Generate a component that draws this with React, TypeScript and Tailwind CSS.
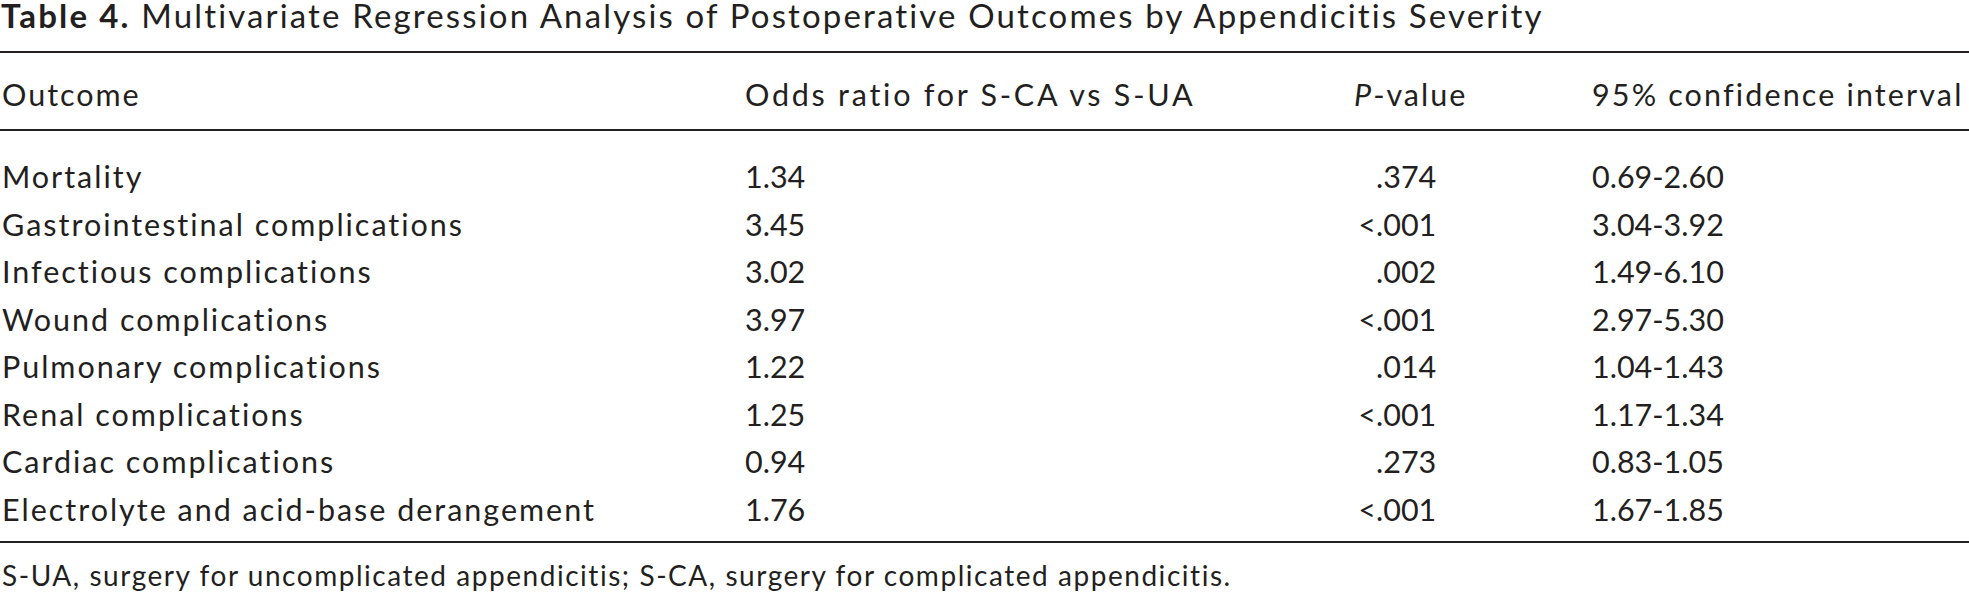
import React from "react";

type Row = {
  outcome: string;
  odds: string;
  lt: boolean;
  p: string;
  ci: string;
};

const rows: Row[] = [
  { outcome: "Mortality", odds: "1.34", lt: false, p: ".374", ci: "0.69-2.60" },
  { outcome: "Gastrointestinal complications", odds: "3.45", lt: true, p: ".001", ci: "3.04-3.92" },
  { outcome: "Infectious complications", odds: "3.02", lt: false, p: ".002", ci: "1.49-6.10" },
  { outcome: "Wound complications", odds: "3.97", lt: true, p: ".001", ci: "2.97-5.30" },
  { outcome: "Pulmonary complications", odds: "1.22", lt: false, p: ".014", ci: "1.04-1.43" },
  { outcome: "Renal complications", odds: "1.25", lt: true, p: ".001", ci: "1.17-1.34" },
  { outcome: "Cardiac complications", odds: "0.94", lt: false, p: ".273", ci: "0.83-1.05" },
  { outcome: "Electrolyte and acid-base derangement", odds: "1.76", lt: true, p: ".001", ci: "1.67-1.85" },
];

const cols = "grid grid-cols-[743px_609px_238px_1fr]";

// p-values line up on the decimal point, "<" sits in a fixed slot
const PValue = ({ lt, p }: { lt: boolean; p: string }) => (
  <span className="whitespace-nowrap">
    <span className="inline-block w-[22px] text-right">{lt ? "<" : ""}</span>
    {p}
  </span>
);

export default function App() {
  return (
    <div className="w-[1969px] h-[599px] bg-white text-[#231f20] font-['Lato',sans-serif] overflow-hidden">
      {/* caption */}
      <div className="text-[33px] leading-[30px] tracking-[0.065em] pl-[1px] whitespace-nowrap">
        <span className="font-bold">Table 4.</span>{" "}
        Multivariate Regression Analysis of Postoperative Outcomes by Appendicitis Severity
      </div>

      <div className="mt-[21px] border-t-2 border-[#231f20] text-[30.5px] leading-[47.5px]">
        <div className={`${cols} pt-[18px] pb-[10.5px] pl-[2px] tracking-[0.065em]`}>
          <div>Outcome</div>
          <div className="whitespace-nowrap tracking-[0.09em]">Odds ratio for S-CA vs S-UA</div>
          <div>
            <span className="italic">P</span>-value
          </div>
          <div className="whitespace-nowrap tracking-[0.07em]">95% confidence interval</div>
        </div>

        <div className="border-t-2 border-[#231f20] pt-[22px] pb-[8px] pl-[2px]">
          {rows.map((r) => (
            <div key={r.outcome} className={cols}>
              <div className="whitespace-nowrap tracking-[0.065em]">{r.outcome}</div>
              <div>{r.odds}</div>
              <div>
                <PValue lt={r.lt} p={r.p} />
              </div>
              <div>{r.ci}</div>
            </div>
          ))}
        </div>
      </div>

      <div className="border-t-2 border-[#231f20] pt-[12px] pl-[2px] text-[28px] leading-[40px] tracking-[0.055em] whitespace-nowrap">
        S-UA, surgery for uncomplicated appendicitis; S-CA, surgery for complicated appendicitis.
      </div>
    </div>
  );
}
